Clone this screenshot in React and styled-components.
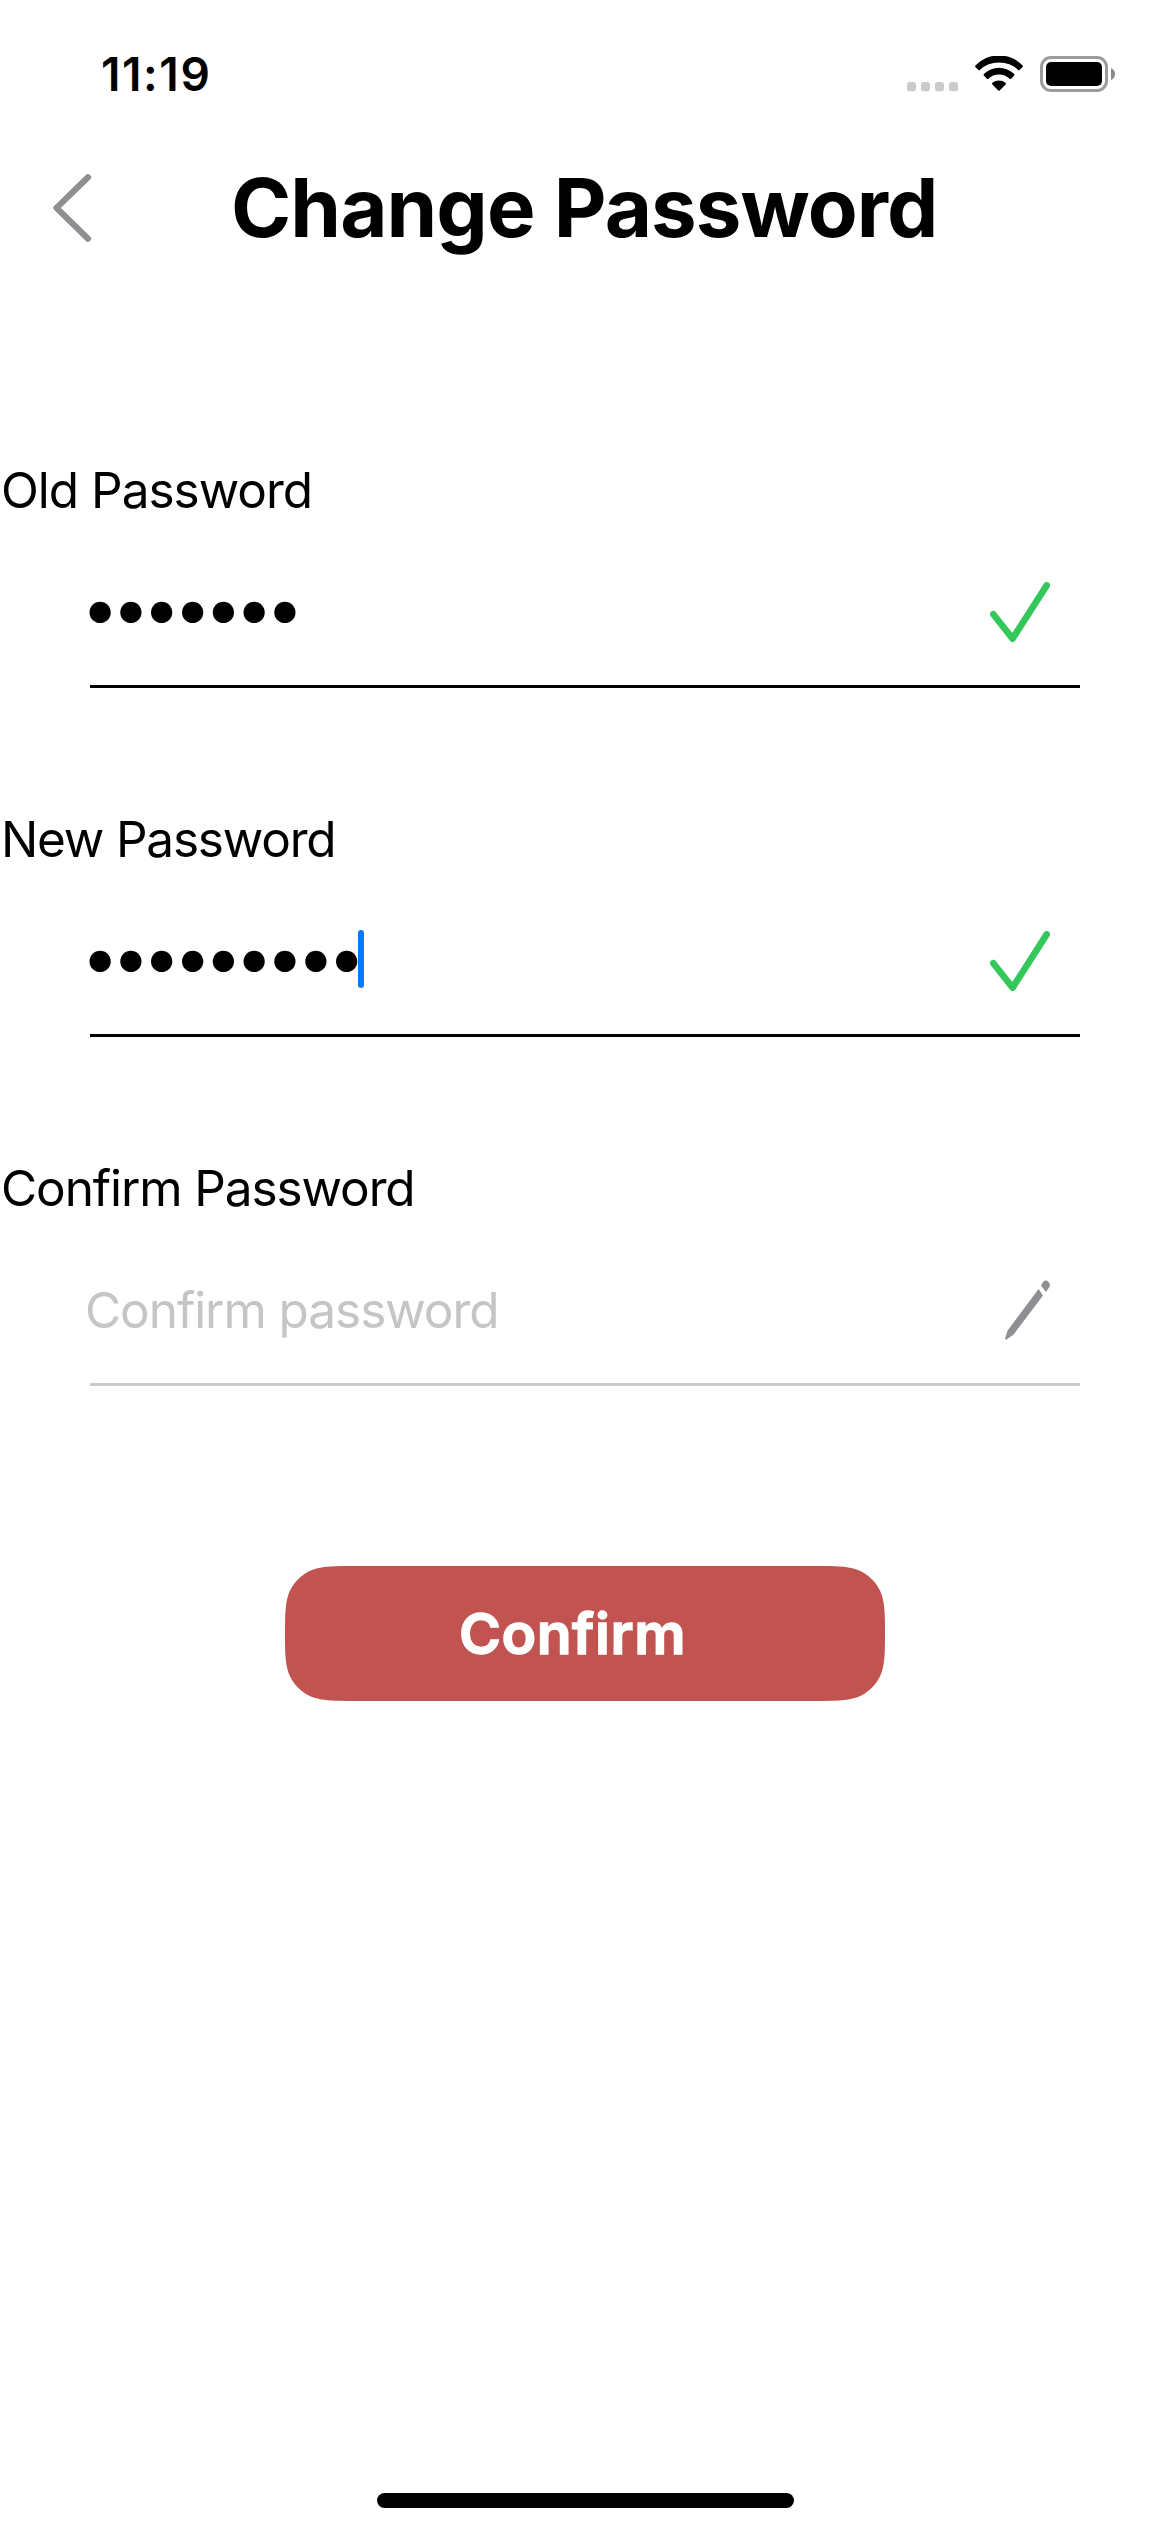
import React from "react";
import styled, { createGlobalStyle } from "styled-components";

const GlobalStyle = createGlobalStyle`
  * { box-sizing: border-box; }
  body { margin: 0; background: #fff; }
`;

const Screen = styled.main`
  display: flex;
  flex-direction: column;
  width: 1170px;
  height: 2532px;
  padding-bottom: 24px;
  background: #fff;
  color: #000;
  font-family: Inter, "Liberation Sans", sans-serif;
  overflow: hidden;
`;

const StatusBar = styled.div`
  display: flex;
  align-items: center;
  justify-content: space-between;
  height: 148px;
  padding: 0 55px 0 101px;
`;

const Time = styled.span`
  font-size: 46px;
  font-weight: 600;
  line-height: 56px;
  letter-spacing: 1.6px;
`;

const StatusIcons = styled.div`
  display: flex;
  gap: 17px;

  svg {
    display: block;
  }
`;

const Header = styled.header`
  display: flex;
  align-items: center;
  height: 120px;
  padding-left: 52px;
`;

const BackButton = styled.button`
  display: flex;
  padding: 0;
  border: 0;
  background: none;
`;

const Title = styled.h1`
  margin: 0 0 0 139px;
  font-size: 81.5px;
  font-weight: 700;
  line-height: 100px;
  letter-spacing: -0.94px;
  word-spacing: 1px;
  white-space: nowrap;
`;

const Form = styled.form`
  display: flex;
  flex-direction: column;
  padding-top: 192px;
`;

const Field = styled.div`
  display: flex;
  flex-direction: column;
  height: 349px;
`;

const Label = styled.label`
  height: 60px;
  padding-left: 1px;
  font-size: 49.5px;
  line-height: 60px;
  letter-spacing: ${(p) => p.$tracking}px;
`;

const Row = styled.div`
  display: flex;
  align-items: center;
  height: 165px;
  padding: 19px 120px 0 81px;
`;

const Bullets = styled.span`
  padding-bottom: 11px;
  font-size: 68px;
  line-height: 82px;
  letter-spacing: -7.44px;
`;

const Caret = styled.span`
  width: 6px;
  height: 58px;
  margin-bottom: 4px;
  border-radius: 3px;
  background: #007aff;
`;

const Placeholder = styled.span`
  padding-left: 4px;
  color: #c5c5c7;
  font-size: 49.5px;
  line-height: 60px;
  letter-spacing: -1.06px;
`;

const FieldIcon = styled.svg`
  display: block;
  margin-left: auto;
`;

const Underline = styled.div`
  height: 3px;
  margin: 0 90px;
  background: ${(p) => (p.$filled ? "#000" : "#cacaca")};
`;

const ConfirmButton = styled.button`
  display: flex;
  align-items: center;
  align-self: center;
  width: 600px;
  height: 135px;
  margin-top: 59px;
  padding: 0 0 0 174px;
  border: 0;
  background: #c15450;
  clip-path: path(
    "M67.5 0H532.5C549 0 560.9 0 571.6 3.4C583.2 7.6 592.4 16.8 596.6 28.4C600 39 600 51 600 67.5C600 84 600 96 596.6 106.6C592.4 118.2 583.2 127.4 571.6 131.6C560.9 135 549 135 532.5 135H67.5C51 135 39 135 28.4 131.6C16.8 127.4 7.6 118.2 3.4 106.6C0 96 0 84 0 67.5C0 51 0 39 3.4 28.4C7.6 16.8 16.8 7.6 28.4 3.4C39 0 51 0 67.5 0Z"
  );
  color: #fff;
  font-family: inherit;
  font-size: 57px;
  font-weight: 600;
  line-height: 70px;
  letter-spacing: 0.5px;
  -webkit-text-stroke: 1.4px #fff;
  stroke-linejoin: round;
`;

const HomeIndicator = styled.div`
  align-self: center;
  width: 417px;
  height: 15px;
  margin: auto 0 0 1px;
  border-radius: 8px;
  background: #000;
`;

const SignalIcon = () => (
  <svg width="51" height="36" viewBox="0 0 51 36" fill="#cbcbcb">
    {[0, 14, 28, 42].map((x) => (
      <rect key={x} x={x} y="26" width="9" height="9.2" rx="2.8" />
    ))}
  </svg>
);

const WifiIcon = () => (
  <svg width="48" height="36" viewBox="0 0 48 36" fill="#000">
    <path d="M.4 9.5A32.6 32.6 0 0 1 47.6 9.5Q48.2 10.2 47.6 10.9L44.6 14Q44 14.6 43.2 14A28 28 0 0 0 4.8 14Q4 14.6 3.4 14L.4 10.9Q-.2 10.2 .4 9.5Z" />
    <path d="M8.8 18.1A21.6 21.6 0 0 1 39.2 18.1Q39.8 18.8 39.2 19.5L36.1 22.7Q35.4 23.3 34.7 22.7A15.6 15.6 0 0 0 13.3 22.7Q12.6 23.3 11.9 22.7L8.8 19.5Q8.2 18.8 8.8 18.1Z" />
    <path d="M17.4 26.8A10.5 10.5 0 0 1 30.6 26.8Q31.4 27.6 30.6 28.4L24.7 34.5Q24 35.2 23.3 34.5L17.4 28.4Q16.6 27.6 17.4 26.8Z" />
  </svg>
);

const BatteryIcon = () => (
  <svg width="75" height="36" viewBox="0 0 75 36">
    <rect x="1.5" y="1.5" width="65" height="33" rx="9.5" fill="none" stroke="#9b9b9b" strokeWidth="3" />
    <rect x="6" y="6" width="56" height="24" rx="5" fill="#000" />
    <path d="M71 12Q75 14 75 18T71 24Z" fill="#8a8a8a" />
  </svg>
);

const ChevronIcon = () => (
  <svg width="40" height="70" viewBox="0 0 40 70" fill="none">
    <path
      d="M36 4.3L4.5 34.9L36 65.7"
      stroke="#8e8e93"
      strokeWidth="6.2"
      strokeLinecap="round"
      strokeLinejoin="round"
    />
  </svg>
);

const CheckIcon = () => (
  <FieldIcon width="60" height="60" viewBox="0 0 60 60" fill="none">
    <path
      d="M3.3 32.2L22.6 56.6L56.7 3.4"
      stroke="#34c759"
      strokeWidth="6.6"
      strokeLinecap="round"
      strokeLinejoin="round"
    />
  </FieldIcon>
);

const PencilIcon = () => (
  <FieldIcon width="60" height="60" viewBox="0 0 60 60" fill="#8e8e93">
    <path d="M48.6 9.1L53 15.4L23.8 54.2Q23.2 55 22.3 55.5L16.5 59.6Q15 60.3 15.2 58.4L17.2 51.6Q17.5 50.6 18.2 49.7Z" />
    <path d="M51 5.6L53.5 1.6Q55.3-.4 57.6 1.1Q60.5 3.3 59.7 6.5L56 12.1Z" />
  </FieldIcon>
);

const PasswordField = ({ label, tracking, count = 0, focused, placeholder }) => (
  <Field>
    <Label $tracking={tracking}>{label}</Label>
    <Row>
      {count > 0 ? <Bullets>{"•".repeat(count)}</Bullets> : <Placeholder>{placeholder}</Placeholder>}
      {focused && <Caret />}
      {count > 0 ? <CheckIcon /> : <PencilIcon />}
    </Row>
    <Underline $filled={count > 0} />
  </Field>
);

export default function App() {
  return (
    <>
      <GlobalStyle />
      <Screen>
        <StatusBar>
          <Time>11:19</Time>
          <StatusIcons>
            <SignalIcon />
            <WifiIcon />
            <BatteryIcon />
          </StatusIcons>
        </StatusBar>
        <Header>
          <BackButton type="button" aria-label="Back">
            <ChevronIcon />
          </BackButton>
          <Title>Change Password</Title>
        </Header>
        <Form>
          <PasswordField label="Old Password" tracking={-1} count={7} />
          <PasswordField label="New Password" tracking={-1.2} count={9} focused />
          <PasswordField label="Confirm Password" tracking={-1.1} placeholder="Confirm password" />
          <ConfirmButton type="button">Confirm</ConfirmButton>
        </Form>
        <HomeIndicator />
      </Screen>
    </>
  );
}
